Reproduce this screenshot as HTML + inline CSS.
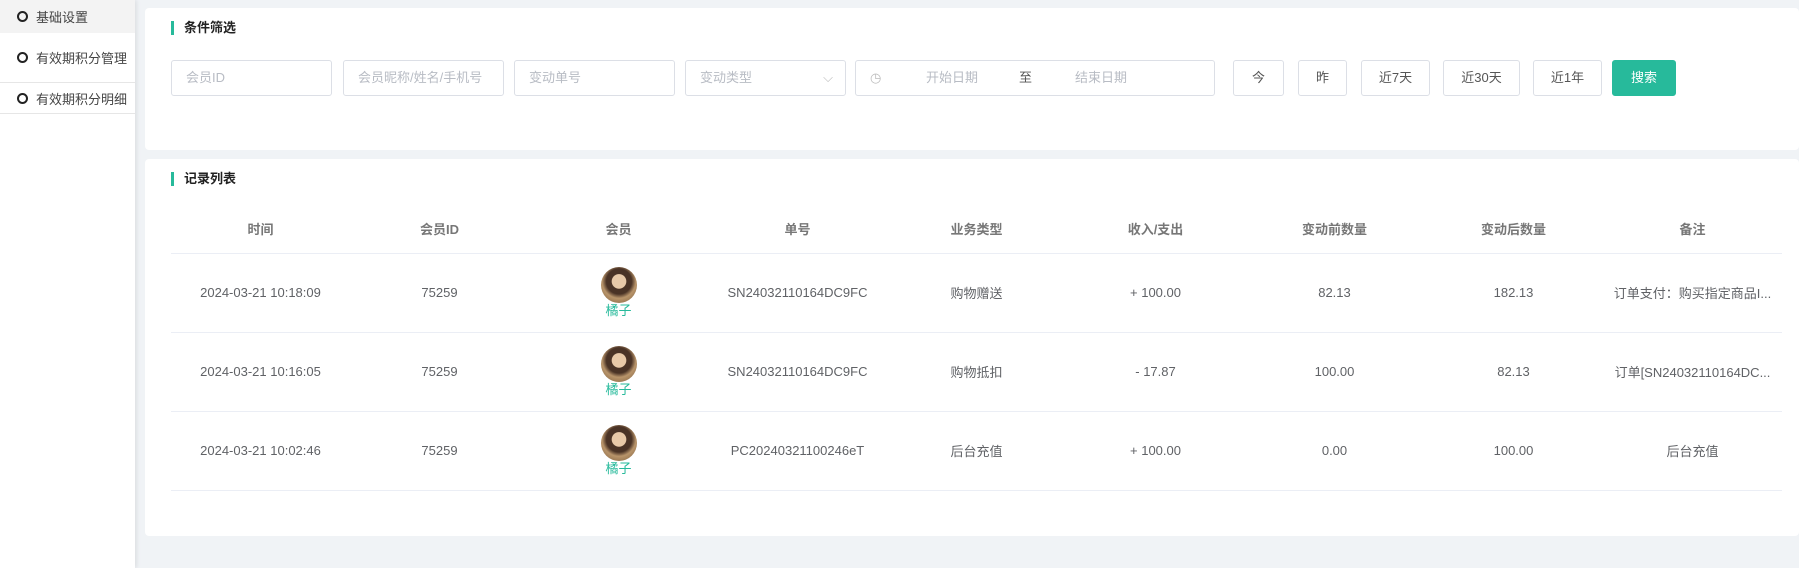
<!DOCTYPE html>
<html><head><meta charset="utf-8"><style>
*{box-sizing:border-box;margin:0;padding:0}
body{width:1799px;height:568px;background:#f0f3f6;font-family:"Liberation Sans","Noto Sans CJK SC",sans-serif;font-size:13px;color:#606266;position:relative;overflow:hidden}
.side{position:absolute;left:0;top:0;width:135px;height:568px;background:#fff;box-shadow:2px 0 4px rgba(0,0,0,.08)}
.it{position:absolute;left:0;width:135px;display:flex;align-items:center;padding-left:17px;font-size:13px;color:#444}
.it i{width:11px;height:11px;border:2px solid #222;border-radius:50%;margin-right:8px;display:inline-block}
.card{position:absolute;left:145px;right:0;background:#fff;border-radius:4px}
.ttl{position:absolute;left:26px;font-size:13px;font-weight:bold;color:#222;border-left:3px solid #27ba9b;padding-left:10px;line-height:14px}
.inp{position:absolute;top:52px;height:36px;border:1px solid #dcdfe6;border-radius:3px;color:#b8bcc4;line-height:34px;padding-left:14px;font-size:13px}
.btn{position:absolute;top:52px;height:36px;border:1px solid #dcdfe6;border-radius:3px;line-height:34px;text-align:center;color:#555}
table{position:absolute;left:26px;top:46px;width:1611px;border-collapse:collapse;table-layout:fixed}
th{height:48px;font-weight:bold;color:#777;border-bottom:1px solid #ebeef5;font-size:13px}
td{height:79px;text-align:center;border-bottom:1px solid #ebeef5;font-size:13px;color:#606266}
.av{width:36px;height:36px;border-radius:50%;margin:0 auto;background:radial-gradient(circle at 50% 40%,#e8c9a8 0 25%,#4a3326 27% 45%,#b8946a 60%,#7a5a3a)}
.nm{color:#27ba9b;line-height:16px}
</style></head><body>
<div class="side">
<div class="it" style="top:0;height:33px;background:#f3f3f3"><i></i>基础设置</div>
<div class="it" style="top:33px;height:50px;border-bottom:1px solid #e6e6e6"><i></i>有效期积分管理</div>
<div class="it" style="top:84px;height:30px;border-bottom:1px solid #e6e6e6"><i></i>有效期积分明细</div>
</div>
<div class="card" style="top:8px;height:142px">
<div class="ttl" style="top:13px">条件筛选</div>
<div class="inp" style="left:26px;width:161px">会员ID</div>
<div class="inp" style="left:198px;width:161px">会员昵称/姓名/手机号</div>
<div class="inp" style="left:369px;width:161px">变动单号</div>
<div class="inp" style="left:540px;width:161px">变动类型<span style="position:absolute;right:12px;top:0;color:#bbb">⌵</span></div>
<div class="inp" style="left:710px;width:360px"><span style="color:#bbb">◷</span><span style="position:absolute;left:70px">开始日期</span><span style="position:absolute;left:163px;color:#555">至</span><span style="position:absolute;left:219px">结束日期</span></div>
<div class="btn" style="left:1088px;width:51px">今</div>
<div class="btn" style="left:1153px;width:49px">昨</div>
<div class="btn" style="left:1216px;width:69px">近7天</div>
<div class="btn" style="left:1298px;width:77px">近30天</div>
<div class="btn" style="left:1388px;width:69px">近1年</div>
<div class="btn" style="left:1467px;width:64px;background:#27ba9b;border-color:#27ba9b;color:#fff">搜索</div>
</div>
<div class="card" style="top:159px;height:377px">
<div class="ttl" style="top:13px">记录列表</div>
<table>
<tr><th>时间</th><th>会员ID</th><th>会员</th><th>单号</th><th>业务类型</th><th>收入/支出</th><th>变动前数量</th><th>变动后数量</th><th>备注</th></tr>
<tr><td>2024-03-21 10:18:09</td><td>75259</td><td><div class="av"></div><div class="nm">橘子</div></td><td>SN24032110164DC9FC</td><td>购物赠送</td><td>+ 100.00</td><td>82.13</td><td>182.13</td><td>订单支付：购买指定商品I...</td></tr>
<tr><td>2024-03-21 10:16:05</td><td>75259</td><td><div class="av"></div><div class="nm">橘子</div></td><td>SN24032110164DC9FC</td><td>购物抵扣</td><td>- 17.87</td><td>100.00</td><td>82.13</td><td>订单[SN24032110164DC...</td></tr>
<tr><td>2024-03-21 10:02:46</td><td>75259</td><td><div class="av"></div><div class="nm">橘子</div></td><td>PC20240321100246eT</td><td>后台充值</td><td>+ 100.00</td><td>0.00</td><td>100.00</td><td>后台充值</td></tr>
</table>
</div>
</body></html>
